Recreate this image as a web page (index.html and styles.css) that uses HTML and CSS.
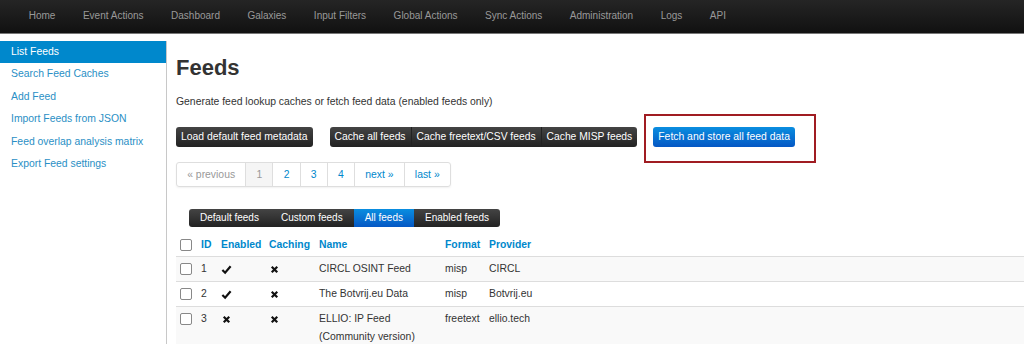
FILE: index.html
```html
<!DOCTYPE html>
<html lang="en">
<head>
    <meta charset="UTF-8">
    <title>Feeds</title>
    <link rel="stylesheet" href="styles.css">
</head>
<body>
    <div class="navbar">
        <ul class="nav">
            <li>Home</li>
            <li>Event Actions</li>
            <li>Dashboard</li>
            <li>Galaxies</li>
            <li>Input Filters</li>
            <li>Global Actions</li>
            <li>Sync Actions</li>
            <li>Administration</li>
            <li>Logs</li>
            <li>API</li>
        </ul>
    </div>
    <div class="page">
        <div class="sidebar">
            <a class="side-link active">List Feeds</a>
            <a class="side-link">Search Feed Caches</a>
            <a class="side-link">Add Feed</a>
            <a class="side-link">Import Feeds from JSON</a>
            <a class="side-link">Feed overlap analysis matrix</a>
            <a class="side-link">Export Feed settings</a>
        </div>
        <div class="main">
            <h2>Feeds</h2>
            <p class="intro">Generate feed lookup caches or fetch feed data (enabled feeds only)</p>

            <div class="toolbar">
                <span class="btn btn-dark">Load default feed metadata</span>
                <span class="btn-group">
                    <span class="btn btn-dark">Cache all feeds</span>
                    <span class="btn btn-dark">Cache freetext/CSV feeds</span>
                    <span class="btn btn-dark">Cache MISP feeds</span>
                </span>
                <span class="highlight">
                    <span class="btn btn-blue">Fetch and store all feed data</span>
                </span>
            </div>

            <div class="pagination">
                <span class="page-item disabled">&laquo; previous</span>
                <span class="page-item current">1</span>
                <span class="page-item">2</span>
                <span class="page-item">3</span>
                <span class="page-item">4</span>
                <span class="page-item">next &raquo;</span>
                <span class="page-item">last &raquo;</span>
            </div>

            <div class="filters">
                <span class="filter">Default feeds</span>
                <span class="filter">Custom feeds</span>
                <span class="filter selected">All feeds</span>
                <span class="filter">Enabled feeds</span>
            </div>

            <table class="feeds">
                <colgroup>
                    <col class="c-cb"><col class="c-id"><col class="c-en"><col class="c-ca">
                    <col class="c-name"><col class="c-fmt"><col>
                </colgroup>
                <thead>
                    <tr>
                        <th><span class="cb"></span></th>
                        <th>ID</th>
                        <th>Enabled</th>
                        <th>Caching</th>
                        <th>Name</th>
                        <th>Format</th>
                        <th>Provider</th>
                    </tr>
                </thead>
                <tbody>
                    <tr>
                        <td><span class="cb"></span></td>
                        <td>1</td>
                        <td><svg class="ico" viewBox="0 0 12 12"><path d="M1.5 6.5 L4.5 9.5 L10.5 2.5" fill="none" stroke="#111" stroke-width="2.4"/></svg></td>
                        <td><svg class="ico" viewBox="0 0 12 12"><path d="M3 3 L9 9 M9 3 L3 9" fill="none" stroke="#111" stroke-width="2.4"/></svg></td>
                        <td>CIRCL OSINT Feed</td>
                        <td>misp</td>
                        <td>CIRCL</td>
                    </tr>
                    <tr>
                        <td><span class="cb"></span></td>
                        <td>2</td>
                        <td><svg class="ico" viewBox="0 0 12 12"><path d="M1.5 6.5 L4.5 9.5 L10.5 2.5" fill="none" stroke="#111" stroke-width="2.4"/></svg></td>
                        <td><svg class="ico" viewBox="0 0 12 12"><path d="M3 3 L9 9 M9 3 L3 9" fill="none" stroke="#111" stroke-width="2.4"/></svg></td>
                        <td>The Botvrij.eu Data</td>
                        <td>misp</td>
                        <td>Botvrij.eu</td>
                    </tr>
                    <tr>
                        <td><span class="cb"></span></td>
                        <td>3</td>
                        <td><svg class="ico" viewBox="0 0 12 12"><path d="M3 3 L9 9 M9 3 L3 9" fill="none" stroke="#111" stroke-width="2.4"/></svg></td>
                        <td><svg class="ico" viewBox="0 0 12 12"><path d="M3 3 L9 9 M9 3 L3 9" fill="none" stroke="#111" stroke-width="2.4"/></svg></td>
                        <td>ELLIO: IP Feed<br>(Community version)</td>
                        <td>freetext</td>
                        <td>ellio.tech</td>
                    </tr>
                </tbody>
            </table>
        </div>
    </div>
</body>
</html>
```

FILE: styles.css
```css
* {
    box-sizing: border-box;
}
html, body {
    height: 100%;
}
body {
    margin: 0;
    font-family: "Liberation Sans", Arial, sans-serif;
    font-size: 10.4px;
    color: #333;
    background: #fff;
    overflow: hidden;
}
.navbar {
    height: 34px;
    background: linear-gradient(to bottom, #252525, #111);
    border-bottom: 1px solid #777;
}
.nav {
    display: flex;
    margin: 0;
    padding: 0 0 0 15px;
    list-style: none;
}
.nav li {
    padding: 0 13.75px;
    line-height: 32px;
    font-size: 10px;
    color: #999;
}
.page {
    display: flex;
    height: calc(100% - 34px);
}
.sidebar {
    width: 167px;
    flex-shrink: 0;
    margin-top: 7px;
    border-right: 1px solid #c8c8c8;
}
.side-link {
    display: block;
    height: 22.4px;
    line-height: 22px;
    padding-left: 11px;
    font-size: 10.4px;
    color: #2a8fc5;
}
.side-link.active {
    background: #0088cc;
    color: #fff;
}
.main {
    flex: 1;
    padding-left: 9px;
}
h2 {
    margin: 21px 0 0;
    font-size: 22px;
    line-height: 26px;
    font-weight: bold;
    color: #333;
}
.intro {
    margin: 14px 0 0;
    line-height: 14px;
}
.toolbar {
    display: flex;
    align-items: center;
    margin-top: 18px;
    height: 20px;
}
.btn {
    display: inline-block;
    height: 20px;
    line-height: 20px;
    padding: 0 5px;
    font-size: 10.4px;
    color: #fff;
    border-radius: 3px;
}
.btn-dark {
    background: linear-gradient(to bottom, #444, #222);
}
.btn-group {
    display: flex;
    margin-left: 17px;
}
.btn-group .btn {
    border-radius: 0;
    font-size: 10.3px;
}
.btn-group .btn:first-child {
    border-radius: 3px 0 0 3px;
}
.btn-group .btn:last-child {
    border-radius: 0 3px 3px 0;
}
.btn-group .btn + .btn {
    border-left: 1px solid #222;
}
.highlight {
    display: flex;
    align-items: center;
    margin: -13px 0 -16px 7px;
    padding: 11px 19px 14px 7px;
    border: 2px solid #a01c22;
}
.btn-blue {
    background: linear-gradient(to bottom, #0a8ee0, #0557c4);
}
.pagination {
    display: flex;
    width: max-content;
    height: 25px;
    margin-top: 15px;
    border: 1px solid #dedede;
    border-radius: 3px;
    box-shadow: 0 1px 2px rgba(0, 0, 0, 0.06);
}
.page-item {
    line-height: 23px;
    padding: 0 10.2px;
    color: #0088cc;
}
.page-item + .page-item {
    border-left: 1px solid #dedede;
}
.page-item.disabled {
    color: #999;
}
.page-item.current {
    background: #f5f5f5;
    color: #999;
}
.filters {
    display: flex;
    width: max-content;
    margin: 22px 0 0 13px;
    border-radius: 3px;
    overflow: hidden;
    background: linear-gradient(to bottom, #444, #222);
}
.filter {
    height: 18px;
    line-height: 18px;
    padding: 0 11px;
    font-size: 10px;
    color: #fff;
}
.filter.selected {
    background: linear-gradient(to bottom, #0a8ee0, #0557c4);
}
.feeds {
    width: 100%;
    margin-top: 5px;
    border-collapse: collapse;
    table-layout: fixed;
}
.c-cb { width: 21px; }
.c-id { width: 20px; }
.c-en { width: 48px; }
.c-ca { width: 50px; }
.c-name { width: 126px; }
.c-fmt { width: 44px; }
.feeds th {
    text-align: left;
    color: #0088cc;
    font-weight: bold;
    padding: 5px 4px 3px;
    line-height: 16px;
    border-bottom: 1px solid #ddd;
    vertical-align: middle;
}
.feeds td {
    padding: 3px 4px;
    line-height: 18px;
    border-bottom: 1px solid #ddd;
    vertical-align: top;
}
.feeds tbody tr:nth-child(odd) td {
    background: #f9f9f9;
}
.cb {
    display: inline-block;
    width: 12px;
    height: 12px;
    border: 1px solid #888;
    border-radius: 2px;
    background: #fff;
    vertical-align: middle;
}
.ico {
    width: 11px;
    height: 11px;
    vertical-align: middle;
}
```
